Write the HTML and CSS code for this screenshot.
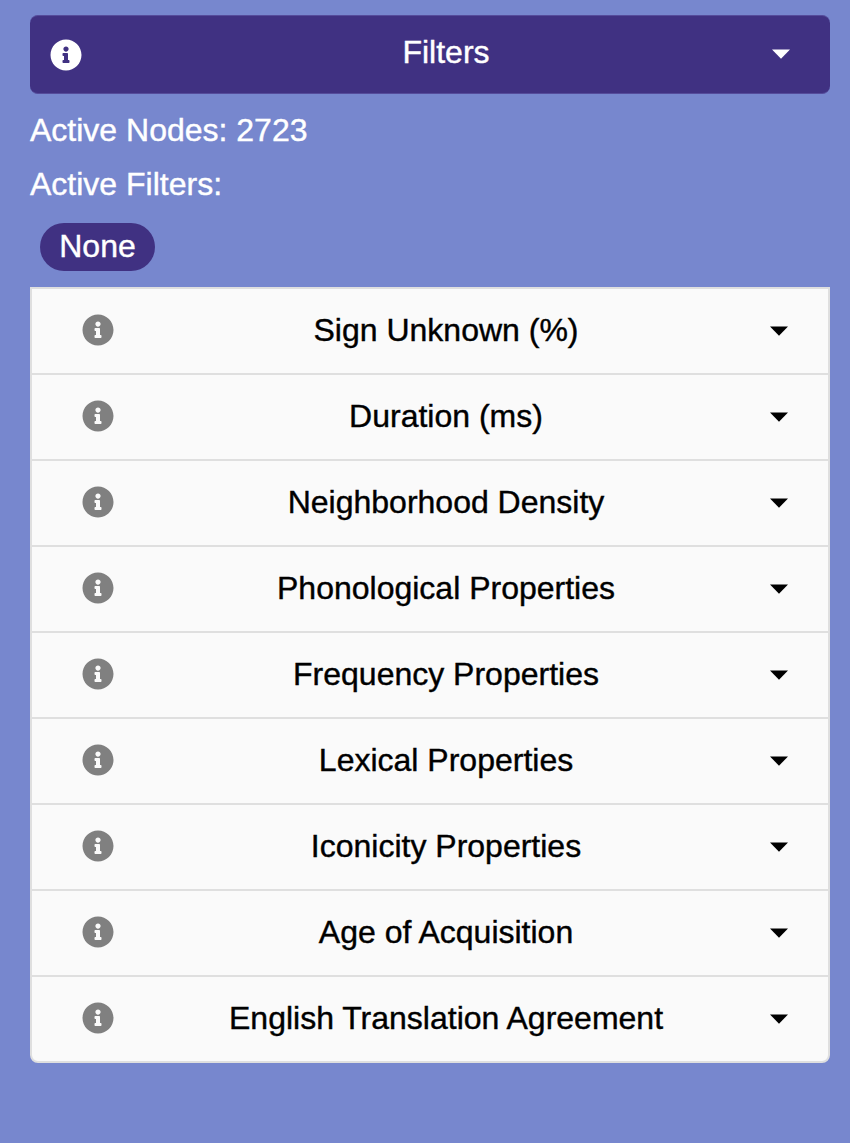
FILE: index.html
```html
<!DOCTYPE html>
<html lang="en">
<head>
<meta charset="utf-8">
<title>Filters</title>
<link rel="stylesheet" href="styles.css">
</head>
<body>
<svg width="0" height="0" class="defs"><symbol id="info" viewBox="0 0 512 512"><path fill="currentColor" d="M256 8C119 8 8 119 8 256s111 248 248 248 248-111 248-248S393 8 256 8zm0 110c23.200 0 42 18.800 42 42s-18.800 42-42 42-42-18.800-42-42 18.800-42 42-42zm56 254c0 6.600-5.400 12-12 12h-88c-6.600 0-12-5.400-12-12v-24c0-6.600 5.400-12 12-12h12v-64h-12c-6.600 0-12-5.400-12-12v-24c0-6.600 5.400-12 12-12h64c6.600 0 12 5.400 12 12v100h12c6.600 0 12 5.400 12 12v24z"/></symbol>
<symbol id="caret" viewBox="0 0 18 10"><path fill="currentColor" d="M0 .5h18L9 9.700z"/></symbol></svg>
<main class="panel">
<header class="header"><svg class="icon"><use href="#info"/></svg><span class="title">Filters</span><svg class="caret"><use href="#caret"/></svg></header>
<p class="status">Active Nodes: 2723</p>
<p class="status">Active Filters:</p>
<span class="badge">None</span>
<ul class="list">
<li class="item"><svg class="icon"><use href="#info"/></svg><span class="label">Sign Unknown (%)</span><svg class="caret"><use href="#caret"/></svg></li>
<li class="item"><svg class="icon"><use href="#info"/></svg><span class="label">Duration (ms)</span><svg class="caret"><use href="#caret"/></svg></li>
<li class="item"><svg class="icon"><use href="#info"/></svg><span class="label">Neighborhood Density</span><svg class="caret"><use href="#caret"/></svg></li>
<li class="item"><svg class="icon"><use href="#info"/></svg><span class="label">Phonological Properties</span><svg class="caret"><use href="#caret"/></svg></li>
<li class="item"><svg class="icon"><use href="#info"/></svg><span class="label">Frequency Properties</span><svg class="caret"><use href="#caret"/></svg></li>
<li class="item"><svg class="icon"><use href="#info"/></svg><span class="label">Lexical Properties</span><svg class="caret"><use href="#caret"/></svg></li>
<li class="item"><svg class="icon"><use href="#info"/></svg><span class="label">Iconicity Properties</span><svg class="caret"><use href="#caret"/></svg></li>
<li class="item"><svg class="icon"><use href="#info"/></svg><span class="label">Age of Acquisition</span><svg class="caret"><use href="#caret"/></svg></li>
<li class="item"><svg class="icon"><use href="#info"/></svg><span class="label">English Translation Agreement</span><svg class="caret"><use href="#caret"/></svg></li>
</ul>
</main>
</body>
</html>
```

FILE: styles.css
```css
* { box-sizing: border-box; }
body { margin: 0; min-height: 1143px; background: #7787ce; color: #fff; font: 32px/48px "Liberation Sans", Arial, sans-serif; -webkit-text-stroke: 0.4px currentColor; }
svg { -webkit-text-stroke: 0; }
.defs { display: block; }
.panel { padding: 15px 20px 0 30px; display: flex; flex-direction: column; align-items: stretch; }
.header { display: grid; grid-template-columns: 70px 1fr 58px; align-items: center; height: 79px; padding: 0 0 0 20px; background: #403182; border-top: 1px solid #554c9b; border-bottom: 1px solid #554c9b; border-radius: 8px; margin-bottom: 12px; }
.icon { width: 32px; height: 32px; display: block; }
.header .icon { margin-top: 1px; }
.title, .label { text-align: center; white-space: nowrap; }
.title { padding-bottom: 5px; }
.label { padding-bottom: 2px; }
.caret { width: 18px; height: 10px; display: block; }
.header .caret { margin-bottom: 2px; }
.status { margin: 0 0 6px; }
.badge { align-self: flex-start; margin: 9px 0 0 10px; height: 48px; width: 115px; line-height: 46px; text-align: center; background: #403182; border-radius: 24px; }
.list { list-style: none; margin: 16px 0 0; padding: 0; border: 2px solid #dfdfdf; border-radius: 0 0 8px 8px; background: #fafafa; color: #000; }
.item { display: grid; grid-template-columns: 40px 1fr 58px; height: 86px; align-items: center; padding-left: 50px; border-bottom: 2px solid #dfdfdf; }
.item:last-child { border-bottom: 0; height: 84px; }
.item .icon { color: #808080; margin-bottom: 3px; }
```
